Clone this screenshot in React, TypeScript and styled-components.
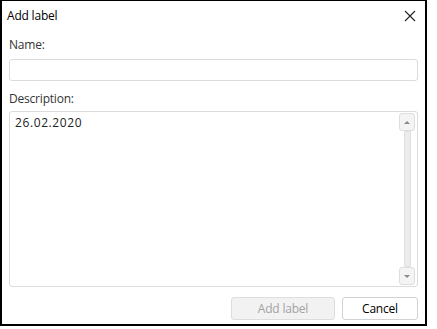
import React from "react";
import styled, { createGlobalStyle } from "styled-components";

const GlobalStyle = createGlobalStyle`
    html, body {
        margin: 0;
        padding: 0;
        background: #ffffff;
    }
    body {
        font-family: "Open Sans", "Noto Sans", sans-serif;
        font-size: 12px;
    }
`;

const Dialog = styled.div`
    box-sizing: border-box;
    width: 427px;
    height: 326px;
    border: 2px solid #000;
    border-top-width: 1px;
    display: flex;
    flex-direction: column;
    background: #fff;
`;

const Header = styled.div`
    height: 29px;
    display: flex;
    align-items: center;
    justify-content: space-between;
    padding: 0 9px 0 5px;
`;

const Title = styled.span`
    font-size: 12px;
    color: #000;
    letter-spacing: -0.2px;
`;

const CloseButton = styled.button`
    border: none;
    background: none;
    padding: 0;
    width: 12px;
    height: 12px;
    display: flex;
    cursor: pointer;
`;

const Body = styled.div`
    flex: 1;
    display: flex;
    flex-direction: column;
    padding: 0 7px 4px 7px;
    min-height: 0;
`;

const Label = styled.label<{ $top: number; $bottom: number }>`
    display: block;
    height: 16px;
    line-height: 16px;
    color: #333;
    letter-spacing: -0.2px;
    margin-top: ${(p) => p.$top}px;
    margin-bottom: ${(p) => p.$bottom}px;
`;

const TextInput = styled.input`
    box-sizing: border-box;
    height: 22px;
    width: 100%;
    border: 1px solid #dcdcdc;
    border-radius: 3px;
    outline: none;
    padding: 0 6px;
    font: inherit;
`;

const TextBox = styled.div`
    box-sizing: border-box;
    height: 176px;
    border: 1px solid #dcdcdc;
    border-radius: 3px;
    display: flex;
`;

const TextContent = styled.div`
    flex: 1;
    padding: 3px 5px;
    line-height: 16px;
    color: #222;
    letter-spacing: 0.6px;
`;

const ScrollBar = styled.div`
    width: 16px;
    margin: 1px 2px 1px 0;
    display: flex;
    flex-direction: column;
    align-items: center;
`;

const ScrollButton = styled.div<{ $down?: boolean }>`
    box-sizing: border-box;
    width: 16px;
    height: 18px;
    border: 1px solid #dedede;
    border-radius: 3px;
    background: #f4f4f4;
    display: flex;
    align-items: center;
    justify-content: center;

    &::after {
        content: "";
        width: 0;
        height: 0;
        border-left: 3px solid transparent;
        border-right: 3px solid transparent;
        ${(p) => (p.$down ? "border-top: 3px solid #8a8a8a;" : "border-bottom: 3px solid #8a8a8a;")}
    }
`;

const ScrollTrack = styled.div`
    box-sizing: border-box;
    flex: 1;
    width: 7px;
    background: #ececec;
    border: 1px solid #e0e0e0;
    border-radius: 1px;
`;

const Footer = styled.div`
    margin-top: 10px;
    display: flex;
    justify-content: flex-end;
    gap: 7px;
`;

const Button = styled.button<{ $width: number }>`
    box-sizing: border-box;
    height: 23px;
    width: ${(p) => p.$width}px;
    border: 1px solid #d2d2d2;
    border-radius: 3px;
    background: #fff;
    color: #000;
    font: inherit;
    letter-spacing: -0.2px;
    padding: 0;

    &:disabled {
        background: #f2f2f2;
        border-color: #dddddd;
        color: #a3a3a3;
    }
`;

const App: React.FC = () => {
    return (
        <>
            <GlobalStyle />
            <Dialog>
                <Header>
                    <Title>Add label</Title>
                    <CloseButton aria-label="Close">
                        <svg width="12" height="12" viewBox="0 0 12 12">
                            <path d="M1 1 L11 11 M11 1 L1 11" stroke="#222" strokeWidth="1.1" />
                        </svg>
                    </CloseButton>
                </Header>
                <Body>
                    <Label $top={7} $bottom={6}>Name:</Label>
                    <TextInput />
                    <Label $top={10} $bottom={4}>Description:</Label>
                    <TextBox>
                        <TextContent>26.02.2020</TextContent>
                        <ScrollBar>
                            <ScrollButton />
                            <ScrollTrack />
                            <ScrollButton $down />
                        </ScrollBar>
                    </TextBox>
                    <Footer>
                        <Button $width={104} disabled>
                            Add label
                        </Button>
                        <Button $width={76}>Cancel</Button>
                    </Footer>
                </Body>
            </Dialog>
        </>
    );
};

export default App;
